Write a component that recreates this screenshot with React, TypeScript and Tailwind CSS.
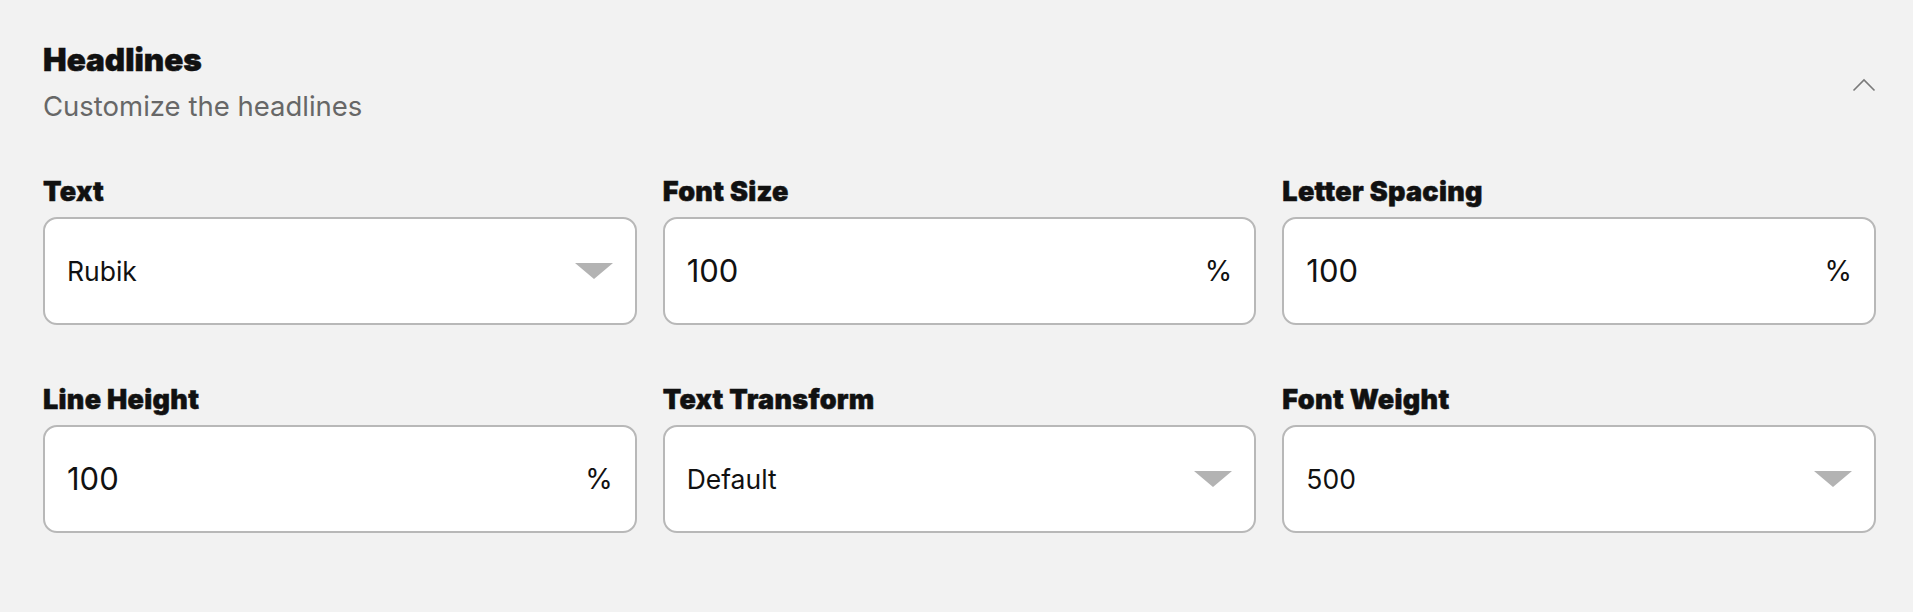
import React from "react";

const FONT = { fontFamily: "Inter, 'Noto Sans', sans-serif" };

function Caret() {
  return (
    <svg width="38" height="16" viewBox="0 0 38 16" className="shrink-0">
      <polygon points="0,0 38,0 19,16" fill="#b3b3b3" />
    </svg>
  );
}

function Chevron() {
  return (
    <svg width="24" height="14" viewBox="0 0 24 14" className="shrink-0 mt-[4px]">
      <polyline points="1.5,12.5 12,2 22.5,12.5" fill="none" stroke="#7a7a7a" strokeWidth="1.6" />
    </svg>
  );
}

type Field = { label: string; value: string; kind: "select" | "number" };

const fields: Field[] = [
  { label: "Text", value: "Rubik", kind: "select" },
  { label: "Font Size", value: "100", kind: "number" },
  { label: "Letter Spacing", value: "100", kind: "number" },
  { label: "Line Height", value: "100", kind: "number" },
  { label: "Text Transform", value: "Default", kind: "select" },
  { label: "Font Weight", value: "500", kind: "select" },
];

function FieldBox({ f }: { f: Field }) {
  return (
    <div className="flex flex-col">
      <div className="text-[27px] leading-[30px] font-black text-[#111111] tracking-[0.3px] [-webkit-text-stroke:0.5px_#111111]">{f.label}</div>
      <div className="mt-[10px] h-[108px] rounded-[14px] border-2 border-[#b8b8b8] bg-white flex items-center justify-between pl-[22px] pr-[22px]">
        {f.kind === "select" ? (
          <>
            <span className="text-[26.5px] leading-[32px] text-[#111111]">{f.value}</span>
            <Caret />
          </>
        ) : (
          <>
            <span className="text-[31px] leading-[36px] text-[#111111]">{f.value}</span>
            <span className="text-[28px] leading-[36px] text-[#111111]">%</span>
          </>
        )}
      </div>
    </div>
  );
}

export default function App() {
  return (
    <div className="min-h-screen w-full bg-[#f2f2f2] pl-[43px] pr-[37px] pt-[41px]" style={FONT}>
      <div className="flex items-center justify-between">
        <div>
          <h2 className="text-[31.5px] leading-[38px] font-black text-[#111111] [-webkit-text-stroke:0.5px_#111111]">Headlines</h2>
          <p className="mt-[9px] text-[27.5px] leading-[36px] text-[#676767]">Customize the headlines</p>
        </div>
        <Chevron />
      </div>
      <div className="mt-[53px] grid grid-cols-3 gap-x-[26px] gap-y-[60px]">
        {fields.map((f) => (
          <FieldBox key={f.label} f={f} />
        ))}
      </div>
    </div>
  );
}
